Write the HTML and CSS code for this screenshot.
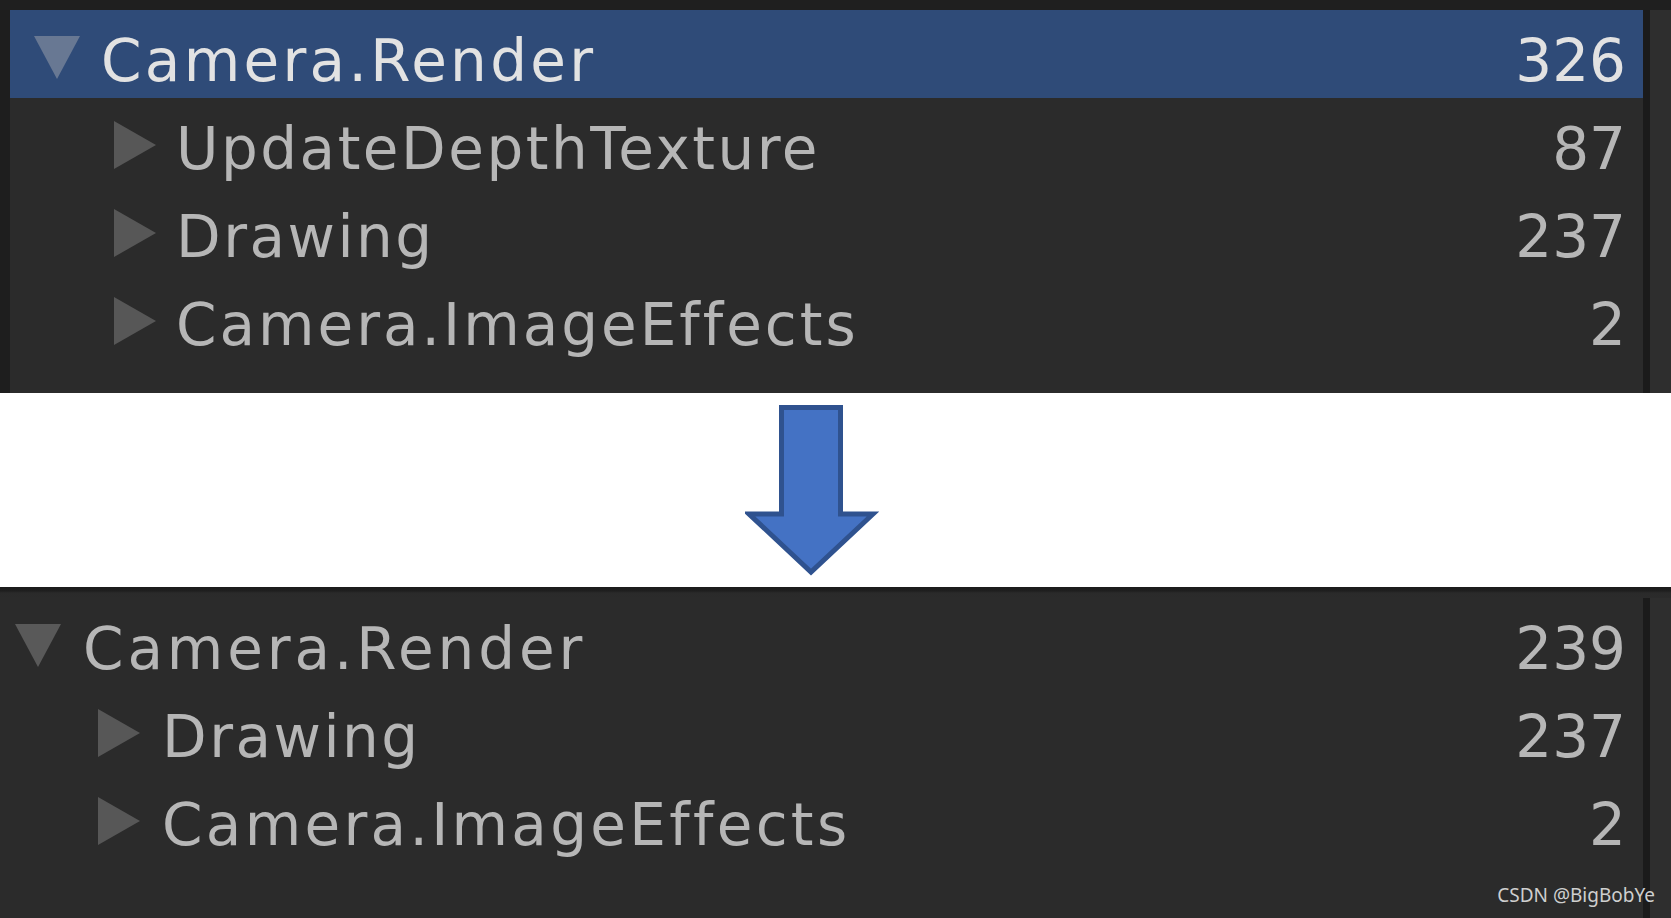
FILE: index.html
```html
<!DOCTYPE html>
<html>
<head>
<meta charset="utf-8">
<link rel="stylesheet" href="styles.css">
</head>
<body>
<div class="page">
  <section class="panel panel-top">
    <div class="strip"></div>
    <div class="panel-body">
      <div class="left-edge"></div>
      <div class="tree">
        <div class="row selected">
          <span class="tri down"></span>
          <span class="label wide">Camera.Render</span>
          <span class="num">326</span>
        </div>
        <div class="row child">
          <span class="tri right"></span>
          <span class="label">UpdateDepthTexture</span>
          <span class="num">87</span>
        </div>
        <div class="row child">
          <span class="tri right"></span>
          <span class="label">Drawing</span>
          <span class="num">237</span>
        </div>
        <div class="row child">
          <span class="tri right"></span>
          <span class="label mid">Camera.ImageEffects</span>
          <span class="num">2</span>
        </div>
      </div>
      <div class="divider"></div>
      <div class="side"></div>
    </div>
  </section>

  <section class="gap">
    <svg class="arrow" width="134" height="176" viewBox="0 0 134 176">
      <path d="M36.5 2.5 H95.5 V109 H128 L66 167 L4 109 H36.5 Z" fill="#4472c4" stroke="#2f528f" stroke-width="5" stroke-linejoin="miter"/>
    </svg>
  </section>

  <section class="panel panel-bottom">
    <div class="strip thin"></div>
    <div class="panel-body">
      <div class="tree tree-b">
        <div class="row">
          <span class="tri down"></span>
          <span class="label wider">Camera.Render</span>
          <span class="num">239</span>
        </div>
        <div class="row child">
          <span class="tri right"></span>
          <span class="label">Drawing</span>
          <span class="num">237</span>
        </div>
        <div class="row child">
          <span class="tri right"></span>
          <span class="label wide">Camera.ImageEffects</span>
          <span class="num">2</span>
        </div>
      </div>
      <div class="divider"></div>
      <div class="side"></div>
    </div>
    <div class="watermark">CSDN @BigBobYe</div>
  </section>
</div>
</body>
</html>
```

FILE: styles.css
```css
* { box-sizing: border-box; }
html, body {
  margin: 0;
  padding: 0;
  background: #ffffff;
}
.page {
  width: 1671px;
  height: 918px;
  overflow: hidden;
  display: flex;
  flex-direction: column;
}
.panel {
  background: #2b2b2b;
  display: flex;
  flex-direction: column;
  position: relative;
}
.panel-top { height: 393px; }
.panel-bottom { height: 331px; }
.strip {
  height: 10px;
  background: #1f1f1f;
  flex: none;
}
.strip.thin {
  height: 11px;
  background: linear-gradient(#1c1c1c 0, #1f1f1f 4px, #2a2a2a 6px, #2b2b2b 11px);
}
.panel-body {
  flex: 1;
  display: flex;
}
.left-edge {
  width: 10px;
  background: #1e1e1e;
  flex: none;
}
.tree {
  width: 1633px;
  flex: none;
  display: flex;
  flex-direction: column;
}
.tree-b { width: 1643px; }
.divider {
  width: 7px;
  background: #1b1b1b;
  flex: none;
}
.side {
  flex: 1;
  background: #2e2e2e;
}
.row {
  height: 88px;
  display: flex;
  align-items: center;
  padding-left: 24px;
  padding-right: 17px;
  font-family: "DejaVu Sans", Verdana, sans-serif;
  font-size: 58px;
  line-height: 58px;
  color: #b6b6b6;
}
.row.child { padding-left: 104px; }
.tree-b .row { padding-left: 15px; }
.tree-b .row.child { padding-left: 98px; }
.row.selected {
  background: #2f4b78;
  color: #e2e2e2;
}
.label {
  padding-top: 14px;
  margin-left: 21px;
  flex: 1;
  white-space: nowrap;
  letter-spacing: 2.5px;
}
.label.mid { letter-spacing: 3px; }
.label.wide { letter-spacing: 3.3px; }
.label.wider { letter-spacing: 3.9px; }
.row.child .label { margin-left: 20px; }
.tree-b .row .label { margin-left: 22px; }
.tree-b .row.child .label { margin-left: 22px; }
.num {
  padding-top: 14px;
  white-space: nowrap;
}
.tri {
  flex: none;
  width: 0;
  height: 0;
  margin-top: 6px;
}
.tri.down {
  border-left: 23px solid transparent;
  border-right: 23px solid transparent;
  border-top: 43px solid #595959;
}
.row.selected .tri.down { border-top-color: #687893; }
.tri.right {
  border-top: 24px solid transparent;
  border-bottom: 24px solid transparent;
  border-left: 42px solid #575757;
}
.gap {
  height: 194px;
  background: #ffffff;
  padding-top: 12px;
  padding-left: 745px;
}
.arrow { display: block; }
.watermark {
  position: absolute;
  right: 16px;
  bottom: 10px;
  font-family: "Noto Sans", "Open Sans", sans-serif;
  font-size: 19px;
  color: #cfcfcf;
}
```
